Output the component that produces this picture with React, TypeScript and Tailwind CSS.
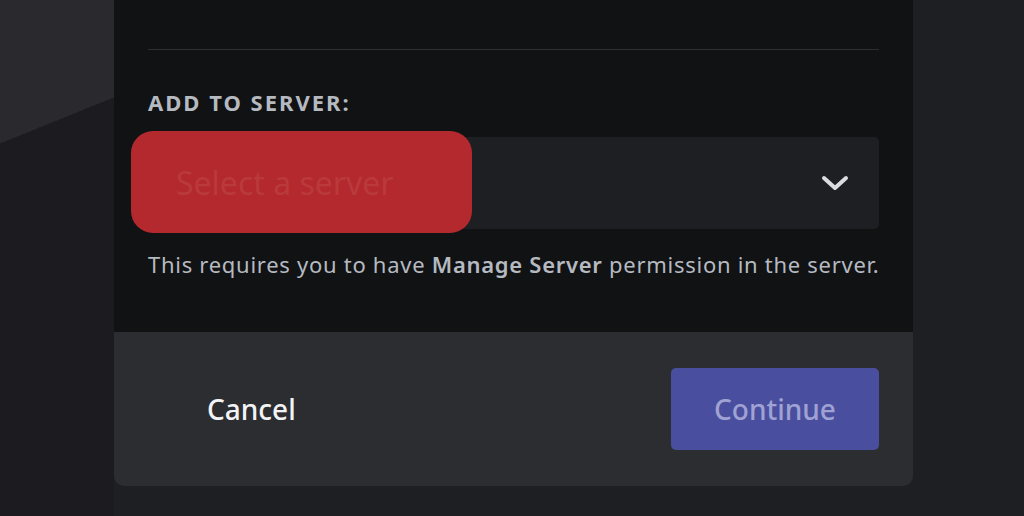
import React from "react";

const font = { fontFamily: '"Noto Sans", "Open Sans", Arial, sans-serif' };

const ChevronDown: React.FC = () => (
  <svg width="28" height="16" viewBox="0 0 28 16" fill="none">
    <polyline
      points="3,3 14,13 25,3"
      stroke="#dbdee1"
      strokeWidth="4"
      strokeLinecap="round"
      strokeLinejoin="round"
    />
  </svg>
);

const ServerSelect: React.FC = () => {
  return (
    <div className="relative mt-[22px] flex h-[92px] items-center justify-between rounded-[5px] bg-[#1e1f22] pl-[28px] pr-[30px]">
      <div className="absolute left-[-17px] top-[-6px] h-[102px] w-[341px] rounded-[22px] bg-[#b3292d]" />
      <span className="relative text-[32px] leading-[40px] text-[#ba393c]">
        Select a server
      </span>
      <ChevronDown />
    </div>
  );
};

export default function App() {
  return (
    <div
      className="flex h-[516px] w-[1024px] overflow-hidden bg-[#1e1f23]"
      style={font}
    >
      <div className="w-[114px] shrink-0 bg-[linear-gradient(158deg,#29292e_0,#29292e_133px,#1c1c20_133px)]" />

      <div className="flex w-[799px] shrink-0 flex-col">
        <div className="h-[332px] bg-[#111214] px-[34px] pt-[49px]">
          <div className="h-px bg-[#2e2f34]" />
          <p className="mt-[39px] text-[22px] font-bold uppercase leading-[26px] tracking-[2px] text-[#b5bac1]">
            Add to server:
          </p>
          <ServerSelect />
          <p className="mt-[21px] whitespace-nowrap text-[22px] leading-[28px] tracking-[0.72px] text-[#b5bac1]">
            This requires you to have{" "}
            <span className="font-semibold">Manage Server</span> permission in
            the server.
          </p>
        </div>

        <div className="flex h-[154px] items-center justify-between rounded-b-[10px] bg-[#2b2d31] pl-[93px] pr-[34px]">
          <button className="text-[28px] font-medium leading-[34px] text-[#f2f3f5]">
            Cancel
          </button>
          <button className="flex h-[82px] w-[208px] items-center justify-center rounded-[5px] bg-[#4a4e9f] text-[28px] font-medium leading-[34px] text-[#9fa2d2]">
            Continue
          </button>
        </div>
      </div>

      <div className="flex-1" />
    </div>
  );
}
